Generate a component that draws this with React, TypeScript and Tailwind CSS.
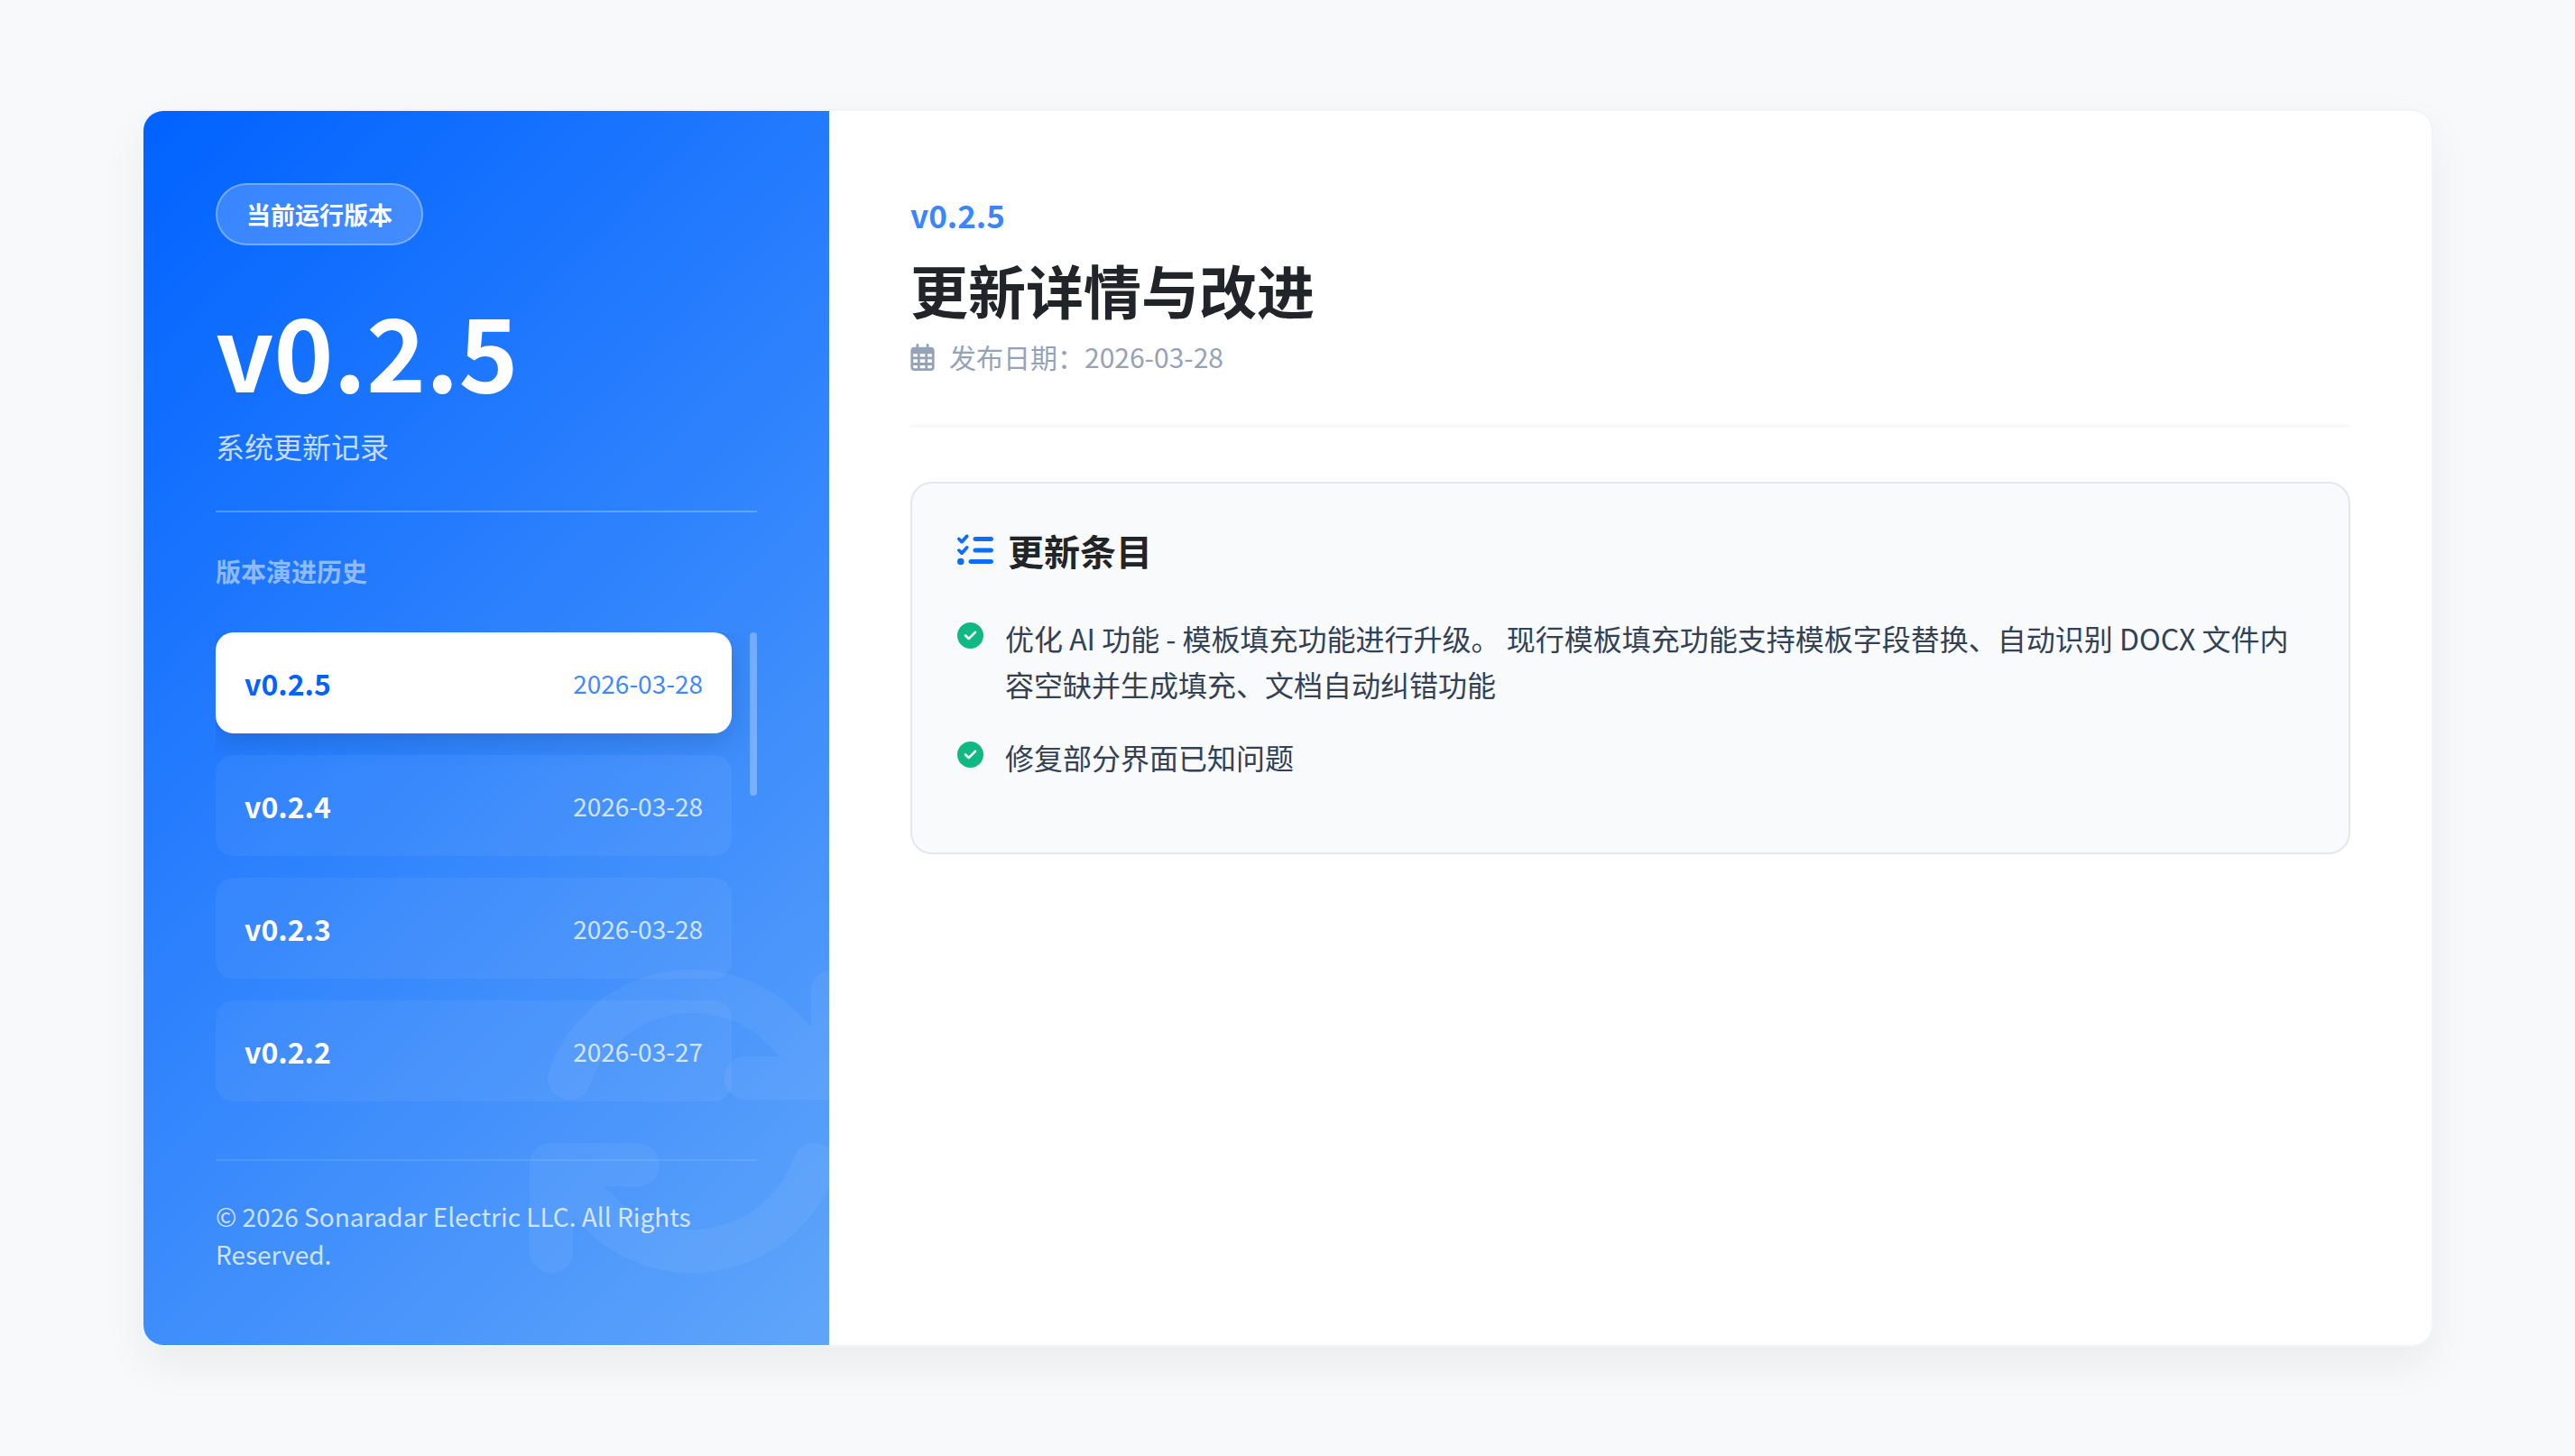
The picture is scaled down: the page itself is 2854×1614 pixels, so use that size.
import React from "react";
import {
  FaCircleCheck,
  FaListCheck,
  FaRegCalendarDays,
} from "react-icons/fa6";

type Release = {
  version: string;
  date: string;
};

const releases: Release[] = [
  { version: "v0.2.5", date: "2026-03-28" },
  { version: "v0.2.4", date: "2026-03-28" },
  { version: "v0.2.3", date: "2026-03-28" },
  { version: "v0.2.2", date: "2026-03-27" },
];

const changes = [
  "优化 AI 功能 - 模板填充功能进行升级。 现行模板填充功能支持模板字段替换、自动识别 DOCX 文件内容空缺并生成填充、文档自动纠错功能",
  "修复部分界面已知问题",
];

function ArrowsIcon({ className }: { className: string }) {
  return (
    <svg viewBox="0 0 512 512" className={className} fill="currentColor" aria-hidden="true">
      <path d="M105.1 202.6c7.7-21.8 20.2-42.3 37.8-59.8c62.5-62.5 163.8-62.5 226.3 0L386.3 160H336c-17.7 0-32 14.3-32 32s14.3 32 32 32H463.9c17.7 0 32-14.3 32-32V64c0-17.7-14.3-32-32-32s-32 14.3-32 32v51.2L414.4 97.6c-87.5-87.5-229.3-87.5-316.8 0C73.2 122 55.6 150.7 44.8 181.4c-5.9 16.7 2.9 34.9 19.5 40.8s34.9-2.9 40.8-19.5zM39 289.3c-5 1.5-9.8 4.2-13.7 8.2c-4 4-6.7 8.8-8.1 14c-.3 1.2-.6 2.5-.8 3.8c-.3 1.7-.4 3.4-.4 5.1V448c0 17.7 14.3 32 32 32s32-14.3 32-32V396.9l17.6 17.5c87.5 87.4 229.3 87.4 316.7 0c24.4-24.4 42.1-53.1 52.9-83.7c5.9-16.7-2.9-34.9-19.5-40.8s-34.9 2.9-40.8 19.5c-7.7 21.8-20.2 42.3-37.8 59.8c-62.5 62.5-163.8 62.5-226.3 0l-.1-.1L125.6 352H176c17.7 0 32-14.3 32-32s-14.3-32-32-32H48.4c-1.6 0-3.2 .1-4.8 .3s-3.1 .5-4.6 1z" />
    </svg>
  );
}

function Sidebar() {
  return (
    <aside className="relative flex w-[760px] shrink-0 flex-col overflow-hidden bg-linear-135/srgb from-[#0062ff] to-[#60a5fa] p-20 text-white">
      <ArrowsIcon className="absolute -right-10 bottom-14 size-96 text-white/5" />

      <span className="self-start rounded-full border-2 border-white/30 bg-white/20 px-8 py-3 text-[27px] leading-[41px] font-bold">
        当前运行版本
      </span>
      <h1 className="mt-12 text-[112px] leading-[132px] font-bold">v0.2.5</h1>
      <p className="mt-[18px] text-[32px] leading-[48px] text-white/75">
        系统更新记录
      </p>
      <hr className="mt-12 border-t-2 border-white/25" />

      {/* history */}
      <h2 className="mt-11 text-[28px] leading-[42px] font-bold text-white/50">
        版本演进历史
      </h2>
      <div className="mt-[47px] flex flex-1">
        <ul className="flex flex-1 flex-col gap-6 overflow-hidden pr-5">
          {releases.map((release, i) => (
            <li key={release.version}>
              <button
                type="button"
                className={
                  i === 0
                    ? "flex h-28 w-full items-center justify-between rounded-[20px] bg-white px-8 text-[#0062ff] shadow-[0_8px_30px_rgba(0,0,0,0.15)]"
                    : "flex h-28 w-full items-center justify-between rounded-[20px] bg-white/5 px-8 text-white"
                }
              >
                <span className="text-[32px] leading-[48px] font-bold">
                  {release.version}
                </span>
                <span className="text-[28px] leading-[42px] opacity-75">
                  {release.date}
                </span>
              </button>
            </li>
          ))}
        </ul>
        <div className="w-2">
          <div className="h-[181px] rounded-full bg-white/30" />
        </div>
      </div>
      {/* history */}

      <footer className="border-t-2 border-white/10 pt-10 text-[28px] leading-[42px] text-white/75">
        © 2026 Sonaradar Electric LLC. All Rights Reserved.
      </footer>
    </aside>
  );
}

function Details() {
  return (
    <main className="flex-1 p-[90px]">
      <header className="border-b-4 border-[#f8f9fa] pb-[52px]">
        <p className="text-[35px] leading-[50px] font-bold text-[#3b86ff]">
          v0.2.5
        </p>
        <h2 className="mt-[18px] text-[64px] leading-[78px] font-bold text-[#212529]">
          更新详情与改进
        </h2>
        <p className="mt-[14px] flex items-center gap-4 text-[30px] leading-[45px] text-[#94a3b8]">
          <FaRegCalendarDays className="h-[30px] w-[27px]" />
          发布日期：2026-03-28
        </p>
      </header>

      {/* change list */}
      <section className="mt-[60px] rounded-3xl border-2 border-[#e2e8f0] bg-[#f8fafc] p-[50px]">
        <h3 className="flex items-center gap-4 text-[40px] leading-[48px] font-bold text-[#212529]">
          <FaListCheck className="text-[#0d6efd]" />
          更新条目
        </h3>
        <ul className="mt-12">
          {changes.map((change) => (
            <li key={change} className="mb-[30px] flex gap-6">
              <FaCircleCheck className="mt-2 size-[29px] shrink-0 text-[#10b981]" />
              <span className="text-[32px] leading-[51px] text-[#334155]">
                {change}
              </span>
            </li>
          ))}
        </ul>
      </section>
      {/* change list */}
    </main>
  );
}

export default function App() {
  return (
    <div className="flex min-h-screen bg-[#f8f9fb] px-[157px] py-[121px] font-['Noto_Sans_CJK_SC',sans-serif]">
      <div className="flex flex-1 overflow-hidden rounded-3xl border-2 border-[#f1f5f9] bg-white shadow-[0_20px_50px_rgba(0,0,0,0.06)]">
        <Sidebar />
        <Details />
      </div>
    </div>
  );
}
